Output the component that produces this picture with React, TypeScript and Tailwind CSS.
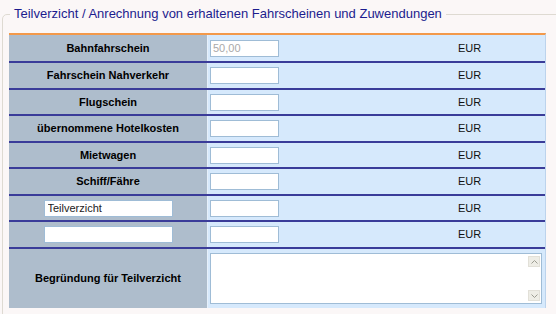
import React from "react";

type Row = {
    label?: string;
    custom?: string;
    value?: string;
    disabled?: boolean;
    h: string;
};

const rows: Row[] = [
    { label: "Bahnfahrschein", value: "50,00", disabled: true, h: "h-[28px]" },
    { label: "Fahrschein Nahverkehr", h: "h-[27px]" },
    { label: "Flugschein", h: "h-[26px]" },
    { label: "übernommene Hotelkosten", h: "h-[27px]" },
    { label: "Mietwagen", h: "h-[26px]" },
    { label: "Schiff/Fähre", h: "h-[27px]" },
    { custom: "Teilverzicht", h: "h-[26px]" },
    { custom: "", h: "h-[27px]" },
];

const Chevron = ({ up }: { up?: boolean }) => (
    <svg width="7" height="4" viewBox="0 0 7 4" className="block">
        <path
            d={up ? "M0.5 3.5 L3.5 0.5 L6.5 3.5" : "M0.5 0.5 L3.5 3.5 L6.5 0.5"}
            fill="none"
            stroke="#9c9c92"
            strokeWidth="1"
        />
    </svg>
);

export default function App() {
    return (
        <div className="w-[556px] h-[314px] overflow-hidden bg-[#fbf7f7] font-['Liberation_Sans',Arial,sans-serif]">
            <fieldset className="mt-[6px] ml-[2px] w-[580px] border border-[#dedad2] rounded-tl-[5px] pl-[6px] pt-[11px] pb-[20px]">
                <legend className="ml-[1px] px-[4px] text-[13px] leading-[16px] text-[#1c1c8e]">
                    Teilverzicht / Anrechnung von erhaltenen Fahrscheinen und Zuwendungen
                </legend>

                <div className="w-[537px] border-t-2 border-[#f3994a] border-r border-r-[#bcd3ec] bg-[#d6e9fc]">
                    {rows.map((row, i) => (
                        <div key={i} className={`grid grid-cols-[198px_187px_1fr] border-b-2 border-b-[#3a3c99] ${row.h}`}>
                            <div className="bg-[#aebdcc] flex items-center justify-center text-[11px] font-bold text-black">
                                {row.custom !== undefined ? (
                                    <input
                                        defaultValue={row.custom}
                                        className="w-[129px] h-[17px] bg-white border border-[#9fbcd6] px-[3px] text-[11px] font-normal text-[#222] outline-none"
                                    />
                                ) : (
                                    row.label
                                )}
                            </div>
                            <div className="flex items-center border-l border-[#e6f0fb] pl-[2px]">
                                <input
                                    defaultValue={row.value}
                                    disabled={row.disabled}
                                    className="w-[69px] h-[17px] bg-white border border-[#9fbcd6] px-[2px] text-[11px] text-[#a9a9a9] outline-none"
                                />
                            </div>
                            <div className="flex items-center justify-center text-[11px] text-[#111]">EUR</div>
                        </div>
                    ))}

                    <div className="grid grid-cols-[198px_1fr] h-[59px]">
                        <div className="bg-[#aebdcc] flex items-center justify-center text-[11px] font-bold text-black">
                            Begründung für Teilverzicht
                        </div>
                        <div className="flex items-center border-l border-[#e6f0fb] pl-[2px]">
                            <div className="flex w-[332px] h-[51px] bg-white border border-[#9fbcd6]">
                                <textarea className="flex-1 resize-none outline-none text-[11px] p-[2px]" />
                                <div className="flex flex-col justify-between pt-[2px] pb-[2px] pr-[1px]">
                                    <div className="w-[12px] h-[11px] bg-[#eeede6] border border-[#e2e0d8] flex items-center justify-center">
                                        <Chevron up />
                                    </div>
                                    <div className="w-[12px] h-[11px] bg-[#eeede6] border border-[#e2e0d8] flex items-center justify-center">
                                        <Chevron />
                                    </div>
                                </div>
                            </div>
                        </div>
                    </div>
                </div>
            </fieldset>
        </div>
    );
}
